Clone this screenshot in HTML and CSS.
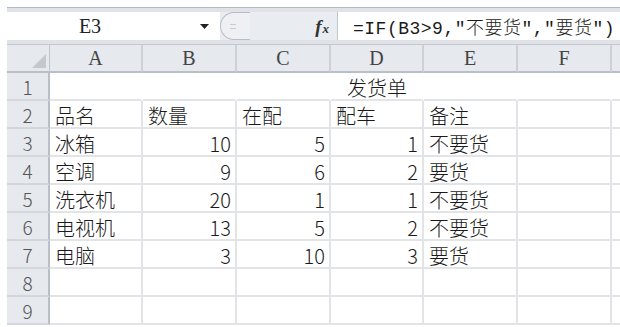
FILE: index.html
```html
<!DOCTYPE html>
<html lang="zh">
<head>
<meta charset="utf-8">
<title>发货单</title>
<link rel="stylesheet" href="styles.css">
</head>
<body>
<div class="wrap">
  <div class="fbar">
    <div class="namebox">
      <span class="ref">E3</span>
      <svg class="arrow" width="9" height="5" viewBox="0 0 9 5"><path d="M0 0H9L4.5 5Z" fill="#222"/></svg>
    </div>
    <div class="mid">
      <div class="pill"><span class="grip"></span></div>
      <span class="fx"><i>f</i><i class="x">x</i></span>
    </div>
    <div class="formula">=IF(B3&gt;9,"不要货","要货")</div>
  </div>
  <div class="sheet">
    <div class="corner"><svg width="14" height="14" viewBox="0 0 14 14"><path d="M14 0V14H0Z" fill="#c3c8ce"/></svg></div>
    <div class="ch">A</div><div class="ch">B</div><div class="ch">C</div><div class="ch">D</div><div class="ch">E</div><div class="ch">F</div><div class="ch last"></div>

    <div class="rh">1</div>
    <div class="c nb"></div><div class="c nb"></div><div class="c nb"></div><div class="c nb ctr">发货单</div><div class="c nb"></div><div class="c nb"></div><div class="c nb"></div>

    <div class="rh">2</div>
    <div class="c">品名</div><div class="c">数量</div><div class="c">在配</div><div class="c">配车</div><div class="c">备注</div><div class="c"></div><div class="c"></div>

    <div class="rh">3</div>
    <div class="c">冰箱</div><div class="c num">10</div><div class="c num">5</div><div class="c num">1</div><div class="c">不要货</div><div class="c"></div><div class="c"></div>

    <div class="rh">4</div>
    <div class="c">空调</div><div class="c num">9</div><div class="c num">6</div><div class="c num">2</div><div class="c">要货</div><div class="c"></div><div class="c"></div>

    <div class="rh">5</div>
    <div class="c">洗衣机</div><div class="c num">20</div><div class="c num">1</div><div class="c num">1</div><div class="c">不要货</div><div class="c"></div><div class="c"></div>

    <div class="rh">6</div>
    <div class="c">电视机</div><div class="c num">13</div><div class="c num">5</div><div class="c num">2</div><div class="c">不要货</div><div class="c"></div><div class="c"></div>

    <div class="rh">7</div>
    <div class="c">电脑</div><div class="c num">3</div><div class="c num">10</div><div class="c num">3</div><div class="c">要货</div><div class="c"></div><div class="c"></div>

    <div class="rh">8</div>
    <div class="c"></div><div class="c"></div><div class="c"></div><div class="c"></div><div class="c"></div><div class="c"></div><div class="c"></div>

    <div class="rh">9</div>
    <div class="c"></div><div class="c"></div><div class="c"></div><div class="c"></div><div class="c"></div><div class="c"></div><div class="c"></div>
  </div>
</div>
</body>
</html>
```
FILE: styles.css
```css
* { box-sizing: border-box; }
html, body { margin: 0; padding: 0; background: #fff; }
body {
  width: 620px;
  height: 327px;
  overflow: hidden;
  font-family: "Liberation Serif", "Noto Sans CJK SC", serif;
  font-weight: 300;
  color: #1a1a1a;
}
.wrap {
  padding: 7px 0 0 7px;
}
.fbar {
  height: 38px;
  display: flex;
  background: #dfe3e8;
  border-top: 1px solid #b4bac2;
  padding: 4px 0 4px 0;
  border-bottom: 1px solid #c2c7ce;
}
.namebox {
  width: 213px;
  background: #fff;
  display: flex;
  align-items: center;
}
.ref {
  flex: 1;
  text-align: center;
  font-size: 20px;
  padding-right: 27px;
  color: #222;
}
.arrow {
  margin-right: 11px;
}
.mid {
  width: 117px;
  display: flex;
  align-items: center;
  justify-content: space-between;
  background: #e9ecf0;
  padding-right: 8px;
}
.pill {
  width: 30px;
  height: 28px;
  border: 1px solid #b8bec6;
  border-right: none;
  border-radius: 14px 0 0 14px;
  background: #eef0f3;
  display: flex;
  align-items: center;
  padding-left: 9px;
}
.grip {
  width: 6px;
  height: 5px;
  border-top: 1px solid #c8ccd2;
  border-bottom: 1px solid #c8ccd2;
}
.fx {
  font-family: "Liberation Serif", serif;
  font-size: 19px;
  font-weight: bold;
  color: #333;
  line-height: 1;
}
.fx .x {
  font-size: 13px;
  margin-left: 1px;
}
.formula {
  flex: 1;
  background: #fff;
  border-left: 1px solid #c0c5cc;
  display: flex;
  align-items: center;
  padding-left: 15px;
  font-family: "Liberation Mono", "Noto Sans CJK SC", monospace;
  font-size: 18px;
  letter-spacing: 0.5px;
  white-space: nowrap;
  color: #1a1a1a;
}
.sheet {
  display: grid;
  grid-template-columns: 43px 93px 94px 94px 93px 94px 94px 8px;
  grid-auto-rows: 28px;
}
.corner {
  background: #e6e9ed;
  border-right: 1px solid #c3c8cf;
  border-bottom: 2px solid #b9bfc7;
  display: flex;
  align-items: flex-end;
  justify-content: flex-end;
  padding: 0 3px 3px 0;
}
.ch {
  background: #e6e9ed;
  border-right: 2px solid #cdd1d7;
  border-bottom: 2px solid #b9bfc7;
  display: flex;
  align-items: center;
  justify-content: center;
  font-size: 20px;
  color: #444;
}
.ch.last { border-right: none; }
.rh {
  background: #e6e9ed;
  border-right: 2px solid #b9bfc7;
  border-bottom: 2px solid #d3d7dc;
  display: flex;
  align-items: center;
  justify-content: center;
  font-family: "Noto Sans CJK SC", sans-serif;
  font-size: 19px;
  color: #555;
}
.c {
  border-right: 2px solid #e2e4e7;
  border-bottom: 2px solid #e2e4e7;
  display: flex;
  align-items: center;
  padding: 2px 4px 0 5px;
  font-family: "Noto Sans CJK SC", sans-serif;
  font-size: 20px;
  white-space: nowrap;
  color: #1a1a1a;
}
.c.nb { border-right-color: transparent; }
.c.ctr { justify-content: center; }
.c.num { justify-content: flex-end; }
```
